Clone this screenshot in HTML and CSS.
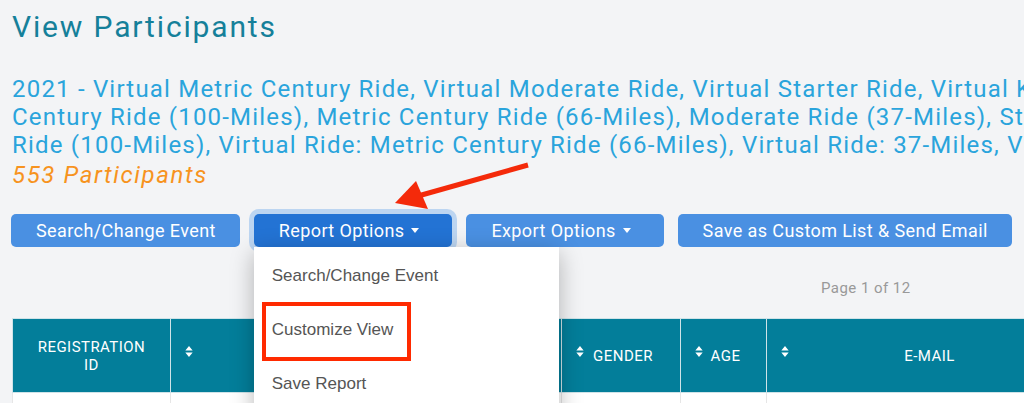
FILE: index.html
```html
<!DOCTYPE html>
<html lang="en">
<head>
  <meta charset="UTF-8">
  <title>View Participants</title>
  <link rel="stylesheet" href="styles.css">
</head>
<body>
  <div class="page">
    <h1 class="title">View Participants</h1>

    <div class="event">
      <span class="line">2021 - Virtual Metric Century Ride, Virtual Moderate Ride, Virtual Starter Ride, Virtual Kids Ride, Century</span>
      <span class="line">Century Ride (100-Miles), Metric Century Ride (66-Miles), Moderate Ride (37-Miles), Starter Ride (15-Miles), Virtual Ride: Century</span>
      <span class="line">Ride (100-Miles), Virtual Ride: Metric Century Ride (66-Miles), Virtual Ride: 37-Miles, Virtual Ride: 15-Miles</span>
      <em class="count">553 Participants</em>
    </div>

    <div class="actions">
      <button class="btn">Search/Change Event</button>
      <div class="dropdown">
        <button class="btn btn-open">Report Options <span class="caret"></span></button>
        <ul class="menu">
          <li>Search/Change Event</li>
          <li>Customize View <span class="mark"></span></li>
          <li>Save Report</li>
        </ul>
      </div>
      <button class="btn">Export Options <span class="caret"></span></button>
      <button class="btn">Save as Custom List &amp; Send Email</button>
    </div>

    <div class="pager">Page 1 of 12</div>

    <table class="grid">
      <colgroup>
        <col style="width:158px">
        <col style="width:391px">
        <col style="width:119px">
        <col style="width:86px">
        <col style="width:322px">
      </colgroup>
      <thead>
        <tr>
          <th>REGISTRATION<br>ID</th>
          <th><svg class="sort" viewBox="0 0 8 12"><path d="M4 0L8 5H0Z M0 7H8L4 12Z"/></svg>NAME</th>
          <th><svg class="sort" viewBox="0 0 8 12"><path d="M4 0L8 5H0Z M0 7H8L4 12Z"/></svg>GENDER</th>
          <th><svg class="sort" viewBox="0 0 8 12"><path d="M4 0L8 5H0Z M0 7H8L4 12Z"/></svg>AGE</th>
          <th><svg class="sort" viewBox="0 0 8 12"><path d="M4 0L8 5H0Z M0 7H8L4 12Z"/></svg>E-MAIL</th>
        </tr>
      </thead>
      <tbody>
        <tr><td></td><td></td><td></td><td></td><td></td></tr>
      </tbody>
    </table>
  </div>

  <svg class="arrow" viewBox="0 0 1024 403">
    <line x1="528" y1="165" x2="418" y2="196" stroke="#f42a0a" stroke-width="5"/>
    <polygon points="395,203 416,181 428,209" fill="#f42a0a"/>
  </svg>
</body>
</html>
```

FILE: styles.css
```css
body {
  margin: 0;
  background: #f3f4f6;
  font-family: Roboto, "Liberation Sans", sans-serif;
  overflow: hidden;
  width: 1024px;
  height: 403px;
  position: relative;
}
.page {
  padding-left: 12px;
}
.title {
  margin: 0;
  padding-top: 9px;
  font-size: 30px;
  line-height: 36px;
  font-weight: 400;
  letter-spacing: 1.85px;
  color: #15809a;
}
.event {
  margin-top: 30px;
  font-size: 24px;
  line-height: 28px;
  letter-spacing: 1.2px;
  color: #2aa4dc;
}
.line {
  display: block;
  white-space: nowrap;
}
.count {
  display: block;
  font-size: 24px;
  line-height: 32px;
  letter-spacing: 1.6px;
  color: #f7931e;
}
.actions {
  display: flex;
  gap: 14px;
  margin-top: 23px;
  margin-left: -1px;
}
.btn {
  font-family: Roboto, sans-serif;
  font-size: 18px;
  line-height: 21px;
  letter-spacing: 0.4px;
  padding: 6px 24px 6px 25px;
  color: #fff;
  background: #4a90e2;
  border: none;
  border-radius: 5px;
  white-space: nowrap;
}
.btn-open {
  background: #2373d4;
  box-shadow: 0 0 0 5px #bcd5f1;
}
.caret {
  display: inline-block;
  vertical-align: middle;
  margin: -3px 9px 0 2px;
  border-top: 5px solid #fff;
  border-left: 4px solid transparent;
  border-right: 4px solid transparent;
}
.dropdown {
  position: relative;
}
.menu {
  position: absolute;
  top: 100%;
  left: 0;
  z-index: 2;
  width: 305px;
  height: 180px;
  margin: 0;
  padding: 2px 0 0;
  list-style: none;
  background: #fff;
  box-shadow: 0 6px 22px rgba(0,0,0,0.28);
}
.menu li {
  position: relative;
  height: 54px;
  line-height: 54px;
  padding-left: 18px;
  font-family: "Liberation Sans", Arial, sans-serif;
  font-size: 17px;
  color: #555;
}
.mark {
  position: absolute;
  left: 8px;
  top: -1px;
  width: 141px;
  height: 51px;
  border: 4px solid #ff2a00;
}
.pager {
  margin-top: 31px;
  margin-left: 809px;
  font-size: 15px;
  line-height: 20px;
  letter-spacing: 0.45px;
  color: #999;
}
.grid {
  margin-top: 20px;
  width: 1076px;
  table-layout: fixed;
  border-collapse: collapse;
}
.grid th {
  height: 73px;
  padding: 0 18px 0 14px;
  background: #037e9a;
  color: #fff;
  font-weight: 400;
  font-size: 15px;
  line-height: 18px;
  letter-spacing: 0.45px;
  text-align: center;
  border: 1px solid #cfe3e8;
}
.grid th:first-child {
  padding: 0 10px;
}
.sort {
  float: left;
  width: 8px;
  height: 11px;
  fill: #fff;
  margin-top: -1px;
}
.grid td {
  height: 30px;
  background: #fff;
  border: 1px solid #e6e6e6;
}
.arrow {
  position: absolute;
  left: 0;
  top: 0;
  width: 1024px;
  height: 403px;
  pointer-events: none;
}
```
